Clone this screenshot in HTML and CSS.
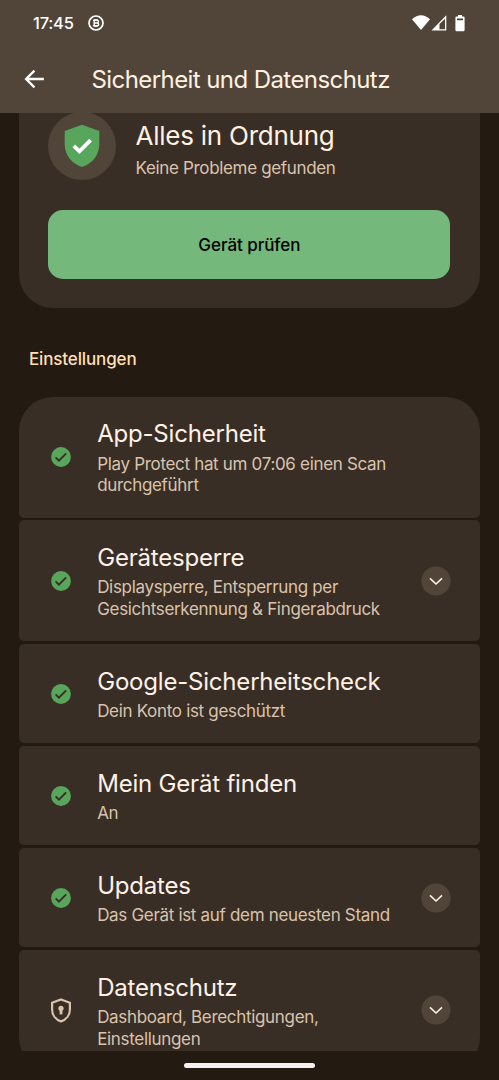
FILE: index.html
```
<!DOCTYPE html>
<html lang="de">
<head>
<meta charset="utf-8">
<title>Sicherheit und Datenschutz</title>
<link rel="stylesheet" href="styles.css">
</head>
<body>
<svg class="defs" width="0" height="0">
  <symbol id="check" viewBox="0 0 20 20"><circle cx="10" cy="10" r="9.9" fill="#58a65b"/><path d="M4.6 10.3l3.3 3.3 7.3-7.3" fill="none" stroke="#392e26" stroke-width="1.9"/></symbol>
  <symbol id="chevron" viewBox="0 0 30 30"><circle cx="15" cy="15" r="14.6" fill="#51453a"/><path d="M9 12.4l6 5.6 6-5.6" fill="none" stroke="#fff1e6" stroke-width="1.6"/></symbol>
</svg>
<div class="screen">
  <header class="top">
    <div class="status">
      <span class="time">17:45</span>
      <svg class="coin" viewBox="0 0 16 16"><circle cx="8" cy="8" r="7" fill="none" stroke="#fff" stroke-width="1.7"/><path d="M5 5.3h4.1a1.35 1.35 0 0 1 0 2.7H6.2h3.1a1.4 1.4 0 0 1 0 2.8H5M6.2 5v6M7.2 4v1M9 4v1M7.2 11v1M9 11v1" fill="none" stroke="#fff" stroke-width="1.4"/></svg>
      <svg class="signals" viewBox="0 0 56 18"><path d="M1 5.2Q10 -2.8 19 5.2L10 16z" fill="#fff"/><path d="M35.3 1.2v15.3H20.5zM34 4.8L28.5 10v5.2H34z" fill="#fff" fill-rule="evenodd"/><path d="M47 1h4v1.4h1.4q1.2 0 1.2 1.2v12.5q0 1.2-1.2 1.2h-6.8q-1.2 0-1.2-1.2V3.6q0-1.2 1.2-1.2H47zM46 4.4v1.9h6V4.4z" fill="#fff" fill-rule="evenodd"/></svg>
    </div>
    <div class="bar">
      <svg class="back" viewBox="0 0 22 20"><path d="M20.8 10H2.5M11 1.2L2.2 10l8.8 8.8" fill="none" stroke="#fff" stroke-width="2.4"/></svg>
      <h1 class="heading">Sicherheit und Datenschutz</h1>
    </div>
  </header>
  <main class="content">
    <section class="summary">
      <div class="state">
        <svg class="badge" viewBox="0 0 68 68"><circle cx="34" cy="34" r="34" fill="#51453a"/><path d="M34 12.7l17.3 6.4v13.2c0 10.7-7 19.5-17.3 22.7-10.3-3.2-17.3-12-17.3-22.7V19.1z" fill="#58a65b"/><path d="M25.8 33.8l5.6 5.5 11.2-11.2" fill="none" stroke="#fff" stroke-width="3.8"/></svg>
        <div>
          <h2 class="state-title">Alles in Ordnung</h2>
          <p class="state-sub">Keine Probleme gefunden</p>
        </div>
      </div>
      <button class="scan">Gerät prüfen</button>
    </section>
    <h3 class="label">Einstellungen</h3>
    <section class="list">
      <div class="item tall"><svg class="icon"><use href="#check"/></svg><div class="text"><h4 class="title">App-Sicherheit</h4><p class="sub">Play Protect hat um 07:06 einen Scan<br>durchgeführt</p></div></div>
      <div class="item tall"><svg class="icon"><use href="#check"/></svg><div class="text"><h4 class="title">Gerätesperre</h4><p class="sub">Displaysperre, Entsperrung per<br>Gesichtserkennung &amp; Fingerabdruck</p></div><svg class="more"><use href="#chevron"/></svg></div>
      <div class="item"><svg class="icon"><use href="#check"/></svg><div class="text"><h4 class="title">Google-Sicherheitscheck</h4><p class="sub">Dein Konto ist geschützt</p></div></div>
      <div class="item"><svg class="icon"><use href="#check"/></svg><div class="text"><h4 class="title">Mein Gerät finden</h4><p class="sub">An</p></div></div>
      <div class="item"><svg class="icon"><use href="#check"/></svg><div class="text"><h4 class="title">Updates</h4><p class="sub">Das Gerät ist auf dem neuesten Stand</p></div><svg class="more"><use href="#chevron"/></svg></div>
      <div class="item tall"><svg class="shield" viewBox="0 0 20 25"><path d="M10 1.5l8.9 3.3v6.6c0 5.5-3.7 10.2-8.9 12-5.2-1.8-8.9-6.5-8.9-12V4.8z" fill="none" stroke="#dac3ac" stroke-width="2.2"/><circle cx="10" cy="10.3" r="2.6" fill="#dac3ac"/><path d="M8.6 10h2.8v6.4H8.6z" fill="#dac3ac"/></svg><div class="text"><h4 class="title">Datenschutz</h4><p class="sub">Dashboard, Berechtigungen,<br>Einstellungen</p></div><svg class="more"><use href="#chevron"/></svg></div>
    </section>
  </main>
  <footer class="nav"><div class="handle"></div></footer>
</div>
</body>
</html>
```
FILE: styles.css
```
* { box-sizing: border-box; margin: 0; }
body { background: #231a11; font-family: Inter, Roboto, sans-serif; }
.defs { position: absolute; }
.screen { width: 499px; height: 1080px; display: flex; flex-direction: column; overflow: hidden; }
.top { height: 113px; flex: none; background: #51453a; }
.status { height: 45px; display: flex; align-items: center; padding: 0 32px 0 33px; }
.time { color: #fff; font-size: 16.5px; font-weight: 500; line-height: 20px; letter-spacing: -.2px; width: 55px; white-space: nowrap; }
.coin { width: 16px; height: 16px; }
.signals { width: 56px; height: 18px; margin-left: auto; }
.bar { height: 68px; display: flex; align-items: center; padding-left: 24px; }
.back { width: 21px; height: 20px; margin-right: 46.5px; }
.heading { color: #fff1e0; font-size: 24px; font-weight: 400; line-height: 30px; letter-spacing: -.58px; margin-top: 1px; white-space: nowrap; }
.content { flex: 1; min-height: 0; overflow: hidden; padding: 0 19.4px; }
.summary { height: 194.5px; background: #392e26; border-radius: 0 0 34px 34px; padding: 0 29px; }
.state { display: flex; gap: 19.2px; height: 97px; align-items: flex-start; white-space: nowrap; }
.badge { width: 68px; height: 68px; margin-top: -1px; flex: none; }
.state-title { color: #fff1e0; font-size: 26px; font-weight: 400; line-height: 32px; letter-spacing: -.25px; margin-top: 7px; }
.state-sub { color: #dac3ac; font-size: 17px; font-weight: 400; line-height: 22px; letter-spacing: -.34px; margin-top: 5px; }
.scan { display: block; width: 402px; height: 69px; border: 0; border-radius: 15px; background: #74b87c; color: #000; font: 500 17px/22px Inter, Roboto, sans-serif; letter-spacing: -.05px; }
.label { color: #ffdfb5; font-size: 17px; font-weight: 500; line-height: 22px; letter-spacing: -.13px; margin: 40.5px 0 0 9.5px; height: 48.5px; }
.list { display: flex; flex-direction: column; gap: 2.4px; }
.item { flex: none; height: 99.6px; display: flex; align-items: center; background: #392e26; border-radius: 5px; padding: 0 29px 0 31.4px; }
.item.tall { height: 121.3px; }
.item:first-child { border-radius: 34px 34px 5px 5px; }
.item:last-child { border-radius: 5px 5px 34px 34px; }
.icon, .shield { width: 20px; height: 20px; margin-right: 26.4px; flex: none; }
.shield { height: 25px; }
.text { flex: 1; white-space: nowrap; padding-top: 2px; }
.title { color: #fff1e6; font-size: 24px; font-weight: 400; line-height: 30px; letter-spacing: -.2px; }
.sub { color: #dac3ac; font-size: 17px; font-weight: 400; line-height: 21.7px; letter-spacing: -.32px; margin-top: 4.5px; }
.more { width: 30px; height: 30px; flex: none; }
.nav { height: 29px; flex: none; display: flex; justify-content: center; padding-top: 12px; }
.handle { width: 131px; height: 5px; border-radius: 3px; background: #f4f1ee; }
```
